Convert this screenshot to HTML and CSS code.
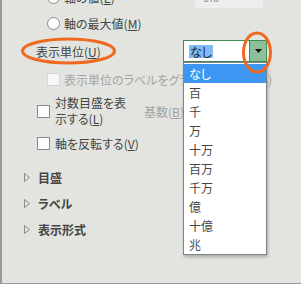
FILE: index.html
```html
<!DOCTYPE html>
<html lang="ja">
<head>
  <meta charset="UTF-8">
  <title>軸の書式設定</title>
  <link rel="stylesheet" href="styles.css">
</head>
<body>
  <div class="pane">
    <div class="rows">
      <div class="row top-row">
        <span class="radio"></span>
        <span class="label">軸の値(<u>E</u>)</span>
        <span class="value-box">0.0</span>
      </div>
      <div class="row radio-row">
        <span class="radio"></span>
        <span class="label">軸の最大値(<u>M</u>)</span>
      </div>
      <div class="row unit-row">
        <span class="label unit-label">表示単位(<u>U</u>)</span>
        <div class="select">
          <span class="select-text"><span class="sel">なし</span></span>
          <span class="select-btn">
            <svg width="7" height="4" viewBox="0 0 7 4"><polygon points="0,0 7,0 3.5,4" fill="#111"/></svg>
          </span>
        </div>
      </div>
      <div class="row check-row disabled">
        <span class="check"></span>
        <span class="label">表示単位のラベルをグラフに表示する(<u>S</u>)</span>
      </div>
      <div class="row check-row log-row">
        <span class="check"></span>
        <span class="label wrap">対数目盛を表示する(<u>L</u>)</span>
        <span class="label base">基数(<u>B</u>)</span>
      </div>
      <div class="row check-row flip-row">
        <span class="check"></span>
        <span class="label">軸を反転する(<u>V</u>)</span>
      </div>

      <div class="section first">
        <svg class="tri" width="6" height="9" viewBox="0 0 6 9"><polygon points="0.5,0.5 5.5,4.5 0.5,8.5" fill="none" stroke="#8a8a8a"/></svg>
        <span>目盛</span>
      </div>
      <div class="section">
        <svg class="tri" width="6" height="9" viewBox="0 0 6 9"><polygon points="0.5,0.5 5.5,4.5 0.5,8.5" fill="none" stroke="#8a8a8a"/></svg>
        <span>ラベル</span>
      </div>
      <div class="section">
        <svg class="tri" width="6" height="9" viewBox="0 0 6 9"><polygon points="0.5,0.5 5.5,4.5 0.5,8.5" fill="none" stroke="#8a8a8a"/></svg>
        <span>表示形式</span>
      </div>
    </div>

    <!-- 開いたドロップダウン -->
    <ul class="dropdown">
      <li class="active">なし</li>
      <li>百</li>
      <li>千</li>
      <li>万</li>
      <li>十万</li>
      <li>百万</li>
      <li>千万</li>
      <li>億</li>
      <li>十億</li>
      <li>兆</li>
    </ul>

    <!-- 注釈の丸 -->
    <svg class="mark mark-label" width="97" height="28" viewBox="0 0 97 28">
      <ellipse cx="48.5" cy="14" rx="46" ry="12" fill="none" stroke="#f0691f" stroke-width="3"/>
    </svg>
    <svg class="mark mark-arrow" width="32" height="43" viewBox="0 0 32 43">
      <ellipse cx="16" cy="21.5" rx="13.5" ry="19.5" fill="none" stroke="#f0691f" stroke-width="3"/>
    </svg>
  </div>
</body>
</html>
```

FILE: styles.css
```css
body {
  margin: 0;
  font-family: "Noto Sans CJK JP", "Noto Sans", sans-serif;
  font-size: 12px;
  font-feature-settings: "palt";
  color: #444;
}

.pane {
  position: relative;
  width: 299px;
  height: 283px;
  background: #e3e4e0;
  border-left: 2px solid #9a9a9a;
  border-bottom: 1px solid #9a9a9a;
  overflow: hidden;
}

.rows {
  margin-top: -14px;
}

.row {
  display: flex;
  align-items: center;
  white-space: nowrap;
}

.label u {
  text-decoration: underline;
  text-underline-offset: 1px;
}

.radio {
  width: 11px;
  height: 11px;
  border: 1px solid #8a8a8a;
  border-radius: 50%;
  background: #fff;
  margin-left: 45px;
  margin-right: 4px;
  flex: none;
}

.top-row {
  height: 22px;
}

.value-box {
  margin-left: 80px;
  width: 60px;
  height: 22px;
  line-height: 22px;
  padding-left: 8px;
  background: #eeeeee;
  color: #999;
  align-self: flex-end;
}

.radio-row {
  height: 30px;
}

.unit-row {
  height: 26px;
}

.unit-label {
  margin-left: 34px;
  width: 147px;
}

.select {
  display: flex;
  width: 82px;
  height: 20px;
  border: 1px solid #3f8d53;
  background: #fff;
}

.select-text {
  flex: 1;
  display: flex;
  align-items: center;
  padding-left: 5px;
}

.sel {
  background: #7fbcf4;
  color: #222;
  padding: 0 1px;
  line-height: 13px;
}

.select-btn {
  width: 16px;
  background: #8cc09a;
  border-left: 1px solid #3f8d53;
  display: flex;
  align-items: center;
  justify-content: center;
}

.check {
  width: 11px;
  height: 11px;
  border: 1px solid #8a8a8a;
  background: #fff;
  margin-left: 35px;
  margin-right: 5px;
  flex: none;
}

.disabled {
  height: 30px;
  color: #a3a3a3;
}

.disabled .check {
  margin-left: 45px;
  margin-right: 4px;
  border-color: #d6d6d6;
  background: #f6f6f6;
}

.log-row {
  height: 34px;
  align-items: center;
}

.wrap {
  white-space: normal;
  width: 74px;
  line-height: 16px;
}

.base {
  margin-left: 15px;
  color: #a3a3a3;
}

.flip-row {
  height: 26px;
  margin-top: 2px;
}

.section {
  display: flex;
  align-items: center;
  height: 26px;
  font-weight: bold;
  color: #444;
}

.section.first {
  margin-top: 8px;
}

.tri {
  margin-left: 22px;
  margin-right: 8px;
}

.dropdown {
  position: absolute;
  left: 181px;
  top: 62px;
  width: 82px;
  margin: 0;
  padding: 1px 0 0;
  list-style: none;
  background: #fff;
  border: 1px solid #7f848c;
  box-shadow: 1px 2px 3px rgba(0, 0, 0, 0.25);
}

.dropdown li {
  height: 19px;
  line-height: 19px;
  padding-left: 5px;
  color: #444;
}

.dropdown li.active {
  background: #3d97f2;
  color: #fff;
}

.mark {
  position: absolute;
}

.mark-label {
  left: 18px;
  top: 37px;
}

.mark-arrow {
  left: 239px;
  top: 31px;
}
```
